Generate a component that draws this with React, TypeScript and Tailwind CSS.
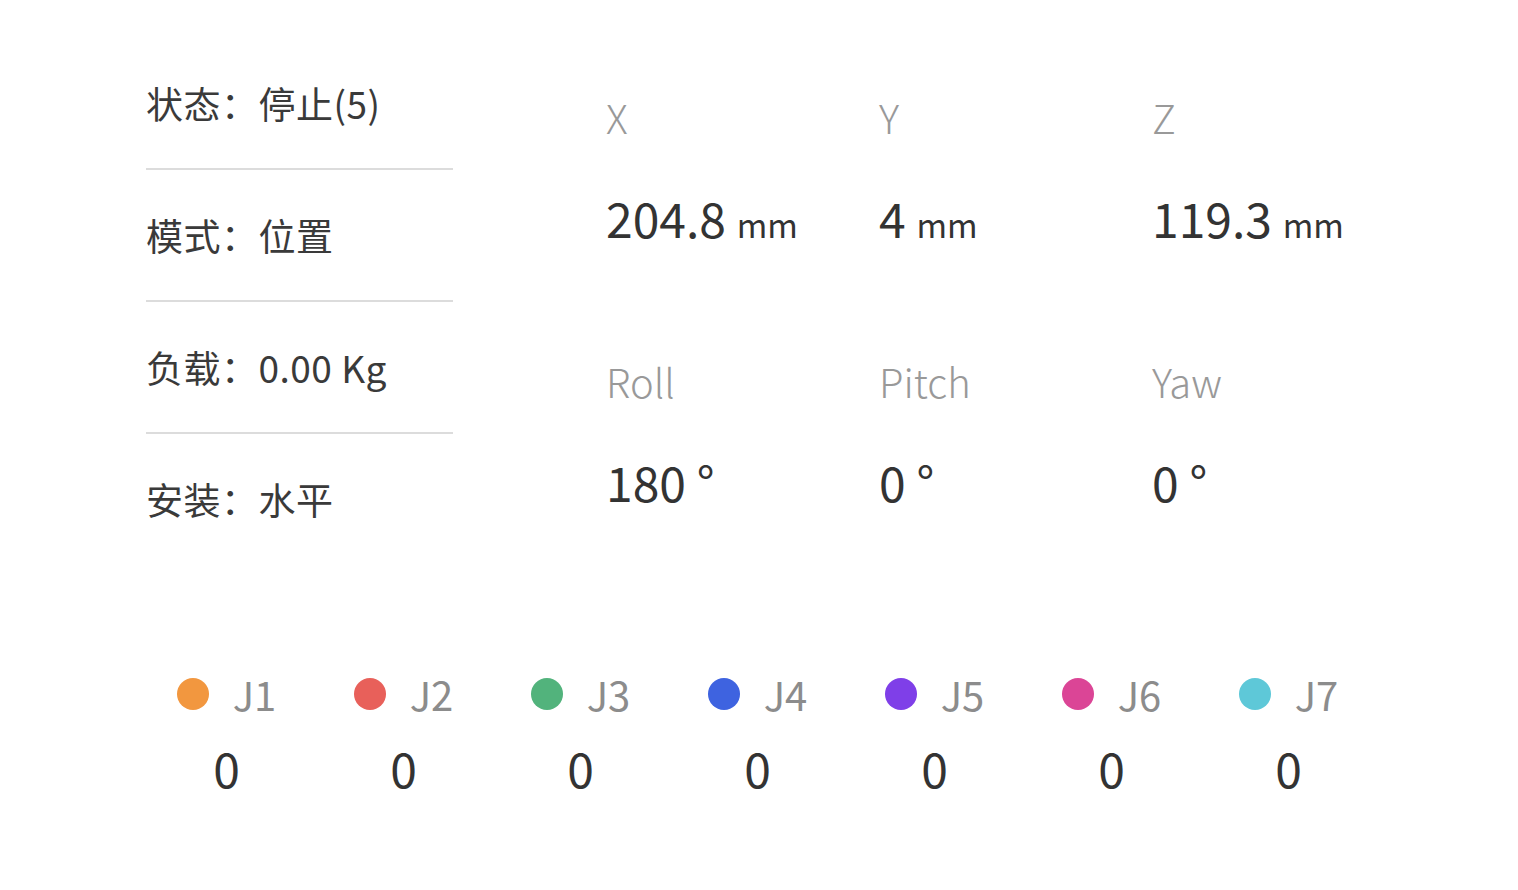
const font = { fontFamily: '"Noto Sans CJK SC", "Noto Sans", sans-serif' };

const infoRows = ['状态：停止(5)', '模式：位置', '负载：0.00 Kg', '安装：水平'];

const poseBlocks = [
  [
    { label: 'X', value: '204.8', unit: 'mm' },
    { label: 'Y', value: '4', unit: 'mm' },
    { label: 'Z', value: '119.3', unit: 'mm' },
  ],
  [
    { label: 'Roll', value: '180 °', unit: '' },
    { label: 'Pitch', value: '0 °', unit: '' },
    { label: 'Yaw', value: '0 °', unit: '' },
  ],
];

const joints = [
  { name: 'J1', color: 'bg-[#f2973f]' },
  { name: 'J2', color: 'bg-[#e8605a]' },
  { name: 'J3', color: 'bg-[#52b37c]' },
  { name: 'J4', color: 'bg-[#3e63e0]' },
  { name: 'J5', color: 'bg-[#7f3fe8]' },
  { name: 'J6', color: 'bg-[#db4596]' },
  { name: 'J7', color: 'bg-[#5ec8d8]' },
];

export default function App() {
  return (
    <div className="min-h-[890px] w-[1518px] bg-white pt-[38px]" style={font}>
      {/* status + pose */}
      <div className="flex">
        <div className="ml-[146px] flex w-[307px] flex-col">
          {infoRows.map((row, i) => (
            <div key={row}>
              <div className="flex h-[130px] items-center text-[37px] leading-[54px] tracking-[0.5px] text-[#3a3a3a]">
                {row}
              </div>
              {i < infoRows.length - 1 && <div className="h-[2px] bg-[#dcdcdc]" />}
            </div>
          ))}
        </div>

        <div className="ml-[153px] flex flex-col">
          {poseBlocks.map((block, i) => (
            <div key={i} className="grid h-[264px] grid-cols-[273px_273px_273px] pt-[50px]">
              {block.map((item) => (
                <div key={item.label} className="flex flex-col">
                  <div className="h-[58px] text-[40px] font-light leading-[58px] text-[#999]">
                    {item.label}
                  </div>
                  <div className="mt-[36px] h-[70px] whitespace-pre text-[48px] leading-[70px] text-[#333]">
                    {item.value}
                    {item.unit && (
                      <>
                        {' '}
                        <span className="text-[33px]">{item.unit}</span>
                      </>
                    )}
                  </div>
                </div>
              ))}
            </div>
          ))}
        </div>
      </div>

      {/* joints */}
      <div className="ml-[138px] mt-[108px] grid grid-cols-[repeat(7,177px)]">
        {joints.map((j) => (
          <div key={j.name} className="flex flex-col items-center">
            <div className="flex h-[40px] items-center gap-[24px]">
              <span className={`h-[32px] w-[32px] rounded-full ${j.color}`} />
              <span className="text-[40px] leading-none text-[#8c8c8c]">{j.name}</span>
            </div>
            <div className="mt-[29px] text-[48px] leading-none text-[#333]">0</div>
          </div>
        ))}
      </div>
    </div>
  );
}
